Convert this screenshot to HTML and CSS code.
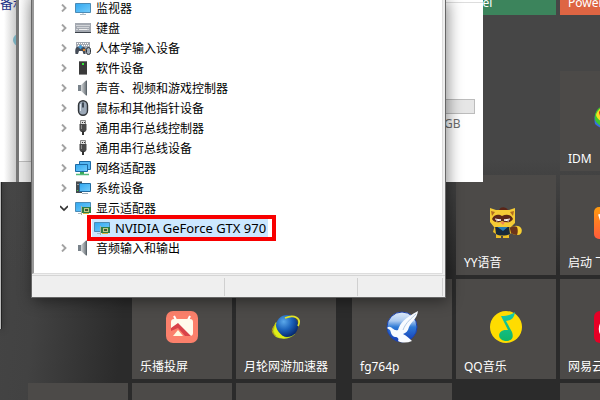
FILE: index.html
```
<!DOCTYPE html>
<html lang="zh-CN">
<head>
    <meta charset="UTF-8">
    <meta name="viewport" content="width=device-width, initial-scale=1.0">
    <title>设备管理器</title>
    <link rel="stylesheet" href="styles.css">
</head>
<body>
    <!-- shared icons -->
    <svg class="defs" aria-hidden="true">
        <defs>
            <linearGradient id="screen" x1="0" y1="0" x2="1" y2="1">
                <stop offset="0" stop-color="#31a7ef"/><stop offset="1" stop-color="#75cdfc"/>
            </linearGradient>
            <linearGradient id="metal" x1="0" y1="0" x2="1" y2="0">
                <stop offset="0" stop-color="#d5d8da"/><stop offset="1" stop-color="#626a70"/>
            </linearGradient>
            <linearGradient id="note" x1="0" y1="0" x2="0" y2="1">
                <stop offset="0" stop-color="#15c9ad"/><stop offset="1" stop-color="#11b568"/>
            </linearGradient>
            <linearGradient id="vorange" x1="0" y1="0" x2="0" y2="1">
                <stop offset="0" stop-color="#ff9b0f"/><stop offset="1" stop-color="#ff5a3c"/>
            </linearGradient>
            <radialGradient id="globe" cx="0.35" cy="0.3" r="0.75">
                <stop offset="0" stop-color="#5ba8ea"/><stop offset="0.5" stop-color="#1c63bb"/><stop offset="1" stop-color="#05256a"/>
            </radialGradient>
            <linearGradient id="sky" x1="0" y1="0" x2="0" y2="1">
                <stop offset="0" stop-color="#e4effc"/><stop offset="0.3" stop-color="#a9c8ef"/><stop offset="0.5" stop-color="#2e7ad6"/><stop offset="1" stop-color="#1238b5"/>
            </linearGradient>
            <symbol id="chevron" viewBox="0 0 8 8"><path d="M2 0.5 5.5 4 2 7.5" fill="none" stroke="#a3a3a3" stroke-width="1.9"/></symbol>
            <symbol id="monitor" viewBox="0 0 16 16">
                <path d="M5 14.5h6M8 13v1" stroke="#a9bac5"/>
                <path d="M.5 3.5h15v9H.5z" fill="url(#screen)" stroke="#4b8bb6"/>
            </symbol>
            <symbol id="keyboard" viewBox="0 0 16 16">
                <path d="M0 3h16v9H0z" fill="#a4a9b1"/><path d="M0 12h16v1H0z" fill="#3d434b"/>
                <path d="M1.5 5.5h13M2.5 7.5h12M1.5 9.5h2M12.5 9.5h2" stroke="#fff" stroke-dasharray="1 1"/><path d="M4 9.5h8" stroke="#eee"/>
            </symbol>
            <symbol id="hid" viewBox="0 0 16 16">
                <path d="M1 2h14v8H1z" fill="#a4a9b1"/><path d="M2 3.5h12M3 5.5h12" stroke="#fff" stroke-dasharray="1 1"/>
                <path d="M2 7h7c2 1 2 4 1.5 7H8.5l-1-3H4l-1 3H.5C0 11 0 8 2 7z" fill="#454c57"/>
                <path d="M5.500 5v4M3.500 7h4" stroke="#409cdb" stroke-width="1.500"/><path d="M8 10h2" stroke="#e08428" stroke-width="2"/>
                <rect x="11.500" y="7.500" width="4" height="7" rx="2" fill="#a4afba" stroke="#30363d"/>
            </symbol>
            <symbol id="tower" viewBox="0 0 16 16">
                <path d="M4 1h8v14H4z" fill="#3a3a3a"/><path d="M4 1h8v1H4z" fill="#777"/><path d="M7 3h2v2H7z" fill="#34e835"/><path d="M4 14h8v1H4z" fill="#8b8b8b"/>
            </symbol>
            <symbol id="speaker" viewBox="0 0 16 16">
                <path d="M3 5h4v6H3z" fill="#79828a"/><path d="M6 5l5-4.500h1v15h-1L6 11z" fill="url(#metal)"/><path d="M11.500 1v14" stroke="#5b646b"/>
            </symbol>
            <symbol id="mouse" viewBox="0 0 16 16">
                <rect x="3.500" y="0.700" width="9" height="14.600" rx="4.500" fill="#9ba8b7" stroke="#303438" stroke-width="1.400"/>
                <path d="M8 2.500v5" stroke="#29333d" stroke-width="1.600"/><path d="M5.500 4v7" stroke="#dce5ee"/>
            </symbol>
            <symbol id="usb" viewBox="0 0 16 16">
                <path d="M5.500 .5h5v4h-5z" fill="#ddd" stroke="#888"/><path d="M7 2.500h1M9 2.500h1" stroke="#333"/>
                <path d="M4.500 4h7v6l-1.500 2H6l-1.500-2z" fill="#4a4a4a"/><path d="M8 11v4" stroke="#333" stroke-width="2"/><path d="M6.500 5v4" stroke="#8a8a8a"/>
            </symbol>
            <symbol id="network" viewBox="0 0 16 16">
                <path d="M4.500 1.500h11v8h-11z" fill="#55b6f2" stroke="#1d6aa5"/><path d="M.500 4.500h12v7H.500z" fill="url(#screen)" stroke="#1d6aa5"/>
                <path d="M7 12v3" stroke="#36a85a" stroke-width="4"/><path d="M1 14.500h13" stroke="#53b978" stroke-width="1.500"/>
            </symbol>
            <symbol id="system" viewBox="0 0 16 16">
                <path d="M1 1h6v12H1z" fill="#454b50"/><path d="M1 1.500h6M2 4.500h4" stroke="#999"/><path d="M2 10h1v1H2z" fill="#42df42"/>
                <path d="M4.500 3.500h11v8h-11z" fill="url(#screen)" stroke="#236b9f"/><path d="M7 13.500h6" stroke="#9baab4"/>
            </symbol>
            <symbol id="display" viewBox="0 0 16 16">
                <path d="M.500 2.500h15v9H.500z" fill="url(#screen)" stroke="#4b8bb6"/><path d="M3 13.500h3" stroke="#a9bac5"/>
                <path d="M7 7h9v6H7z" fill="#2f7d46"/><path d="M6.500 6v9" stroke="#aab6a8"/><path d="M9 8h5v4H9z" fill="#c2c985"/><path d="M10 9h3v2h-3z" fill="#405b38"/><path d="M8 13.500h6" stroke="#dfb73c"/>
            </symbol>
        </defs>
    </svg>

    <main class="desktop">
        <section class="start-menu">
            <button class="tile office excel">Excel</button>
            <button class="tile office powerpoint">PowerPoint</button>

            <button class="tile idm">
                <svg viewBox="0 0 32 32"><path d="M1 21C-2 8 8 0 18 2c10 1 14 10 12 18-3 8-20 10-29 1z" fill="#386de0"/><path d="M1 17C-1 6 9 0 18 2l10 12-12 11C9 24 3 22 1 17z" fill="#3dc52f"/><path d="M2 12C5 2 17 0 25 6L14 21C7 19 3 16 2 12z" fill="#f6dd23"/><path d="M5 9C9 2 18 2 24 7L13 17C8 15 5 13 5 9z" fill="#df2821"/></svg>
                <span>IDM</span>
            </button>

            <button class="tile yy">
                <svg viewBox="0 0 32 32">
                    <path d="M20 21c4-3 9-3 11 0 2 3 0 7-3 7-4 0-6-1-8-3z" fill="#f6ce32"/><path d="M20 21c2-2 5-2 7-1 1 3 1 5 0 8-3 0-5-1-7-3z" fill="#6b351b"/>
                    <path d="M5 18h14l2 8-2 2v3h-6v-2h-2v2H6v-4l-3-2z" fill="#edbf25"/><path d="M5 19h14l1 8c-4 2-11 2-14 0z" fill="#17293b"/><path d="M6 19h13l-6 5z" fill="#237cb7"/>
                    <path d="M0 1l6 2h13l6-2v15l-4 4H4l-4-5z" fill="#f4cb35"/><path d="M1 4l4 1-3 4zM24 4l-4 1 3 4z" fill="#af6b21"/><path d="M9 3c2-4 7-3 9 0z" fill="#5a2517"/>
                    <path d="M2 12c2-5 7-5 10-3 4-2 9-2 11 3-2 4-7 4-11 2-3 2-8 2-10-2z" fill="#5b2718"/><path d="M5 12l6 1-5 1M20 12l-6 1 5 1" fill="none" stroke="#fff"/><path d="M10 15h5l-2 3z" fill="#ed8654"/>
                </svg>
                <span>YY语音</span>
            </button>
            <button class="tile launch">
                <svg viewBox="0 0 32 32"><rect width="32" height="32" rx="5" fill="url(#vorange)"/><path d="M6 7l5 16 5-9 5 9 5-16" fill="none" stroke="#fff" stroke-width="4"/></svg>
                <span>启动 飞火</span>
            </button>

            <button class="tile lebo">
                <svg viewBox="0 0 32 32">
                    <rect width="32" height="32" rx="7" fill="#fb806b"/><path d="M10 9L8 5M22 9l2-4" stroke="#fff" stroke-width="2"/>
                    <path d="M8 8h16q3 0 3 3v11q0 3-3 3h-4L12 13l-7 5v-7q0-3 3-3z" fill="#fffbeb"/><path d="M5 17l7-5 13 13h-6l-7-8-7 3z" fill="#d94349"/><path d="M12 19l5 6H7z" fill="#fff9df"/>
                </svg>
                <span>乐播投屏</span>
            </button>
            <button class="tile moon">
                <svg viewBox="0 0 32 32">
                    <path d="M6 11C2 17 2 23 6 26c6 3 15 2 19-3l-8-2z" fill="#c5df17"/><path d="M6 13C1 18 1 22 6 25" fill="none" stroke="#c5a812"/>
                    <circle cx="17" cy="15" r="11" fill="url(#globe)"/><path d="M15 7c9-4 17 0 13 8" fill="none" stroke="#e2e529" stroke-width="1.700"/><path d="M6 12c-1 7 5 12 10 15-6 1-11-2-12-7z" fill="#e0ee18"/>
                </svg>
                <span>月轮网游加速器</span>
            </button>
            <button class="tile fg">
                <svg viewBox="0 0 32 32">
                    <circle cx="16" cy="16" r="15" fill="url(#sky)" stroke="#1e43ad"/>
                    <path d="M1 17c4-4 6 4 11 2C14 12 19 7 32 0c-1 8-7 11-9 16-1 4-3 6-6 7 4 2 6 4 9 7-5 2-10 2-14 0 1-2 0-4-3-4-4-1-4-5-5-7z" fill="#f8fbff"/><path d="M17 19C20 11 25 8 30 3" fill="none" stroke="#b5cbe4"/>
                </svg>
                <span>fg764p</span>
            </button>
            <button class="tile qq">
                <svg viewBox="0 0 32 32"><circle cx="16" cy="16" r="16" fill="#ffdc00"/><path d="M11 5c6 0 10-1 14-4-1 7-4 8-9 9l6 11c3 9-4 9-7 9-8-1-8-11 1-11h2z" fill="url(#note)"/></svg>
                <span>QQ音乐</span>
            </button>
            <button class="tile cloud">
                <svg viewBox="0 0 32 32"><rect width="32" height="32" rx="6" fill="#e60026"/><path d="M19 5c-4 2-3 7-1 12 2 6-7 7-6 1 1-6 14-5 12 4-2 7-18 7-18-4 0-6 4-9 7-9" fill="none" stroke="#fff" stroke-width="2.500"/></svg>
                <span>网易云音乐</span>
            </button>

            <button class="tile bottom-row col-1" aria-label="应用"></button>
            <button class="tile bottom-row col-2" aria-label="应用"></button>
            <button class="tile bottom-row col-3" aria-label="应用"></button>
            <button class="tile bottom-row col-5" aria-label="应用"></button>
            <button class="tile bottom-row col-7" aria-label="应用"></button>
        </section>

        <div class="edge-window"></div>

        <section class="explorer">
            <div class="explorer-side">
                <h2>备和</h2>
                <span class="disc"></span>
            </div>
            <div class="explorer-frame"><div class="frame-view"></div></div>
            <div class="drive">
                <div class="drive-bar"></div>
                <span>GB</span>
            </div>
        </section>

        <section class="device-manager">
            <ul class="tree">
                <li><button class="toggle" aria-label="展开"><svg><use href="#chevron"/></svg></button><svg class="icon"><use href="#monitor"/></svg>监视器</li>
                <li><button class="toggle" aria-label="展开"><svg><use href="#chevron"/></svg></button><svg class="icon"><use href="#keyboard"/></svg>键盘</li>
                <li><button class="toggle" aria-label="展开"><svg><use href="#chevron"/></svg></button><svg class="icon"><use href="#hid"/></svg>人体学输入设备</li>
                <li><button class="toggle" aria-label="展开"><svg><use href="#chevron"/></svg></button><svg class="icon"><use href="#tower"/></svg>软件设备</li>
                <li><button class="toggle" aria-label="展开"><svg><use href="#chevron"/></svg></button><svg class="icon"><use href="#speaker"/></svg>声音、视频和游戏控制器</li>
                <li><button class="toggle" aria-label="展开"><svg><use href="#chevron"/></svg></button><svg class="icon"><use href="#mouse"/></svg>鼠标和其他指针设备</li>
                <li><button class="toggle" aria-label="展开"><svg><use href="#chevron"/></svg></button><svg class="icon"><use href="#usb"/></svg>通用串行总线控制器</li>
                <li><button class="toggle" aria-label="展开"><svg><use href="#chevron"/></svg></button><svg class="icon"><use href="#usb"/></svg>通用串行总线设备</li>
                <li><button class="toggle" aria-label="展开"><svg><use href="#chevron"/></svg></button><svg class="icon"><use href="#network"/></svg>网络适配器</li>
                <li><button class="toggle" aria-label="展开"><svg><use href="#chevron"/></svg></button><svg class="icon"><use href="#system"/></svg>系统设备</li>
                <li><button class="toggle" aria-label="折叠"><svg viewBox="0 0 8 8"><path d="M0 2l4 4 4-4" fill="none" stroke="#333" stroke-width="1.7"/></svg></button><svg class="icon"><use href="#display"/></svg>显示适配器</li>
                <li class="child"><span class="selected"><svg class="icon"><use href="#display"/></svg>NVIDIA GeForce GTX 970</span><span class="marker"></span></li>
                <li><button class="toggle" aria-label="展开"><svg><use href="#chevron"/></svg></button><svg class="icon"><use href="#speaker"/></svg>音频输入和输出</li>
            </ul>
            <footer class="status-bar"><span></span><span></span><span></span></footer>
        </section>
    </main>
</body>
</html>
```
FILE: styles.css
```
* { margin: 0; padding: 0; box-sizing: border-box; }
body {
    font-family: "Noto Sans", "Noto Sans CJK SC", sans-serif;
    font-size: 12px;
    color: #000;
    overflow: hidden;
}
button {
    border: none;
    background: none;
    font: inherit;
    color: inherit;
}
.defs { position: absolute; width: 0; height: 0; }
.desktop {
    position: relative;
    height: 100vh;
    overflow: hidden;
    background:
        linear-gradient(180deg, #464646 0, #464646 160px, transparent 270px),
        linear-gradient(95deg, #454545 0, #424242 60px, #2b2b2b 150px, #2b2b2b 100%);
}

/* start menu */
.start-menu {
    display: grid;
    grid-template-columns: 100px 100px 100px 8px 100px 100px 100px;
    grid-template-rows: 15px 48px 100px 100px 100px 100px;
    gap: 4px;
    padding-left: 28px;
}
.tile {
    display: flex;
    flex-direction: column;
    align-items: center;
    padding: 32px 8px 4px;
    background: #4c4a48;
    color: #fff;
    line-height: 16px;
    white-space: nowrap;
    overflow: hidden;
}
.tile svg { flex: none; width: 32px; height: 32px; }
.tile span { align-self: flex-start; margin-top: auto; }
.office {
    padding: 0 8px;
    align-items: flex-start;
    justify-content: flex-end;
    line-height: 24px;
}
.excel { grid-area: 1 / 6; background: #3c845c; }
.powerpoint { grid-area: 1 / 7; background: #de6543; }
.idm { grid-area: 3 / 7; }
.yy { grid-area: 4 / 6; }
.launch { grid-area: 4 / 7; }
.lebo { grid-area: 5 / 2; }
.moon { grid-area: 5 / 3; }
.fg { grid-area: 5 / 5; }
.qq { grid-area: 5 / 6; }
.cloud { grid-area: 5 / 7; }
.bottom-row { grid-row: 6; }
.col-1 { grid-column: 1; }
.col-2 { grid-column: 2; }
.col-3 { grid-column: 3; }
.col-5 { grid-column: 5; }
.col-7 { grid-column: 7; }

/* windows behind the device manager */
.edge-window {
    position: absolute;
    left: 0;
    top: 180px;
    width: 2px;
    height: 149px;
    background: #bbb;
    border-right: 1px solid #222;
    box-shadow: 0 0 6px rgba(0,0,0,0.5);
}
.explorer {
    position: absolute;
    left: 0;
    top: 0;
    width: 483px;
    height: 182px;
    display: flex;
    background: #fff;
    overflow: hidden;
}
.explorer-side {
    width: 16px;
    overflow: hidden;
    background: linear-gradient(90deg, #fff 0, #fff 4px, #ccc 16px);
}
.explorer-side h2 {
    color: #1e3287;
    font-size: 13px;
    font-weight: normal;
    line-height: 6px;
    white-space: nowrap;
}
.disc {
    display: block;
    width: 12px;
    height: 12px;
    margin: 28px 0 0 13px;
    border-radius: 50%;
    background: #78aebd;
}
.explorer-frame {
    width: 16px;
    border-left: 3px solid #777;
    background: #e9e9e9;
}
.frame-view {
    height: 162px;
    background: linear-gradient(90deg, #fff, #e0e0e0);
    border-bottom: 1px solid #bbb;
}
.drive {
    flex: 1;
    padding-top: 98px;
    padding-left: 410px;
    color: #6d6d6d;
    border-top: 2px solid #fff;
    box-shadow: inset 0 1px #ddd;
}
.drive-bar {
    width: 33px;
    height: 15px;
    margin-top: -1px;
    border: 1px solid #bcbcbc;
    background: #e6e6e6;
}
.drive span { display: block; padding-left: 2px; line-height: 20px; }

/* device manager */
.device-manager {
    position: absolute;
    left: 31px;
    top: -2px;
    width: 415px;
    border: 1px solid #666;
    border-top: none;
    background: #efefef;
    box-shadow: 2px 3px 14px rgba(0,0,0,0.45);
}
.tree {
    list-style: none;
    margin-right: 2px;
    padding: 0 0 15px 26px;
    border-left: 2px solid #999;
    border-right: 1px solid #ddd;
    border-bottom: 1px solid #ddd;
    background: #fff;
}
.tree li {
    display: flex;
    align-items: center;
    height: 20px;
    white-space: nowrap;
}
.toggle {
    display: flex;
    width: 8px;
    height: 8px;
    margin-right: 7px;
}
.toggle svg { width: 8px; height: 8px; }
.icon { flex: none; width: 16px; height: 16px; margin-right: 5px; }
.tree .child { position: relative; padding-left: 32px; }
.selected {
    display: flex;
    align-items: center;
    height: 20px;
    padding: 0 2px;
    background: #cce8ff;
    font-size: 13px;
}
.marker {
    position: absolute;
    left: 27px;
    top: -3px;
    width: 189px;
    height: 26px;
    border: 4px solid #f80000;
}
.status-bar {
    display: flex;
    height: 22px;
    margin-top: 1px;
    padding: 2px 2px 1px 0;
    border-top: 1px solid #d5d5d5;
}
.status-bar span { width: 85px; border-right: 1px solid #d0d0d0; }
.status-bar span:first-child { width: 193px; }
.status-bar span:nth-child(2) { width: 133px; }
```
